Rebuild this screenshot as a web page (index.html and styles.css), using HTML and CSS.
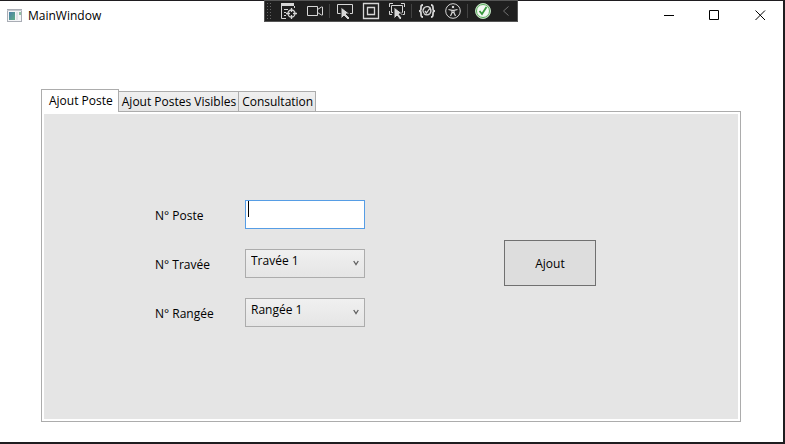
FILE: index.html
```html
<!DOCTYPE html>
<html lang="fr">
<head>
<meta charset="utf-8">
<title>MainWindow</title>
<link rel="stylesheet" href="styles.css">
</head>
<body>
<div class="window">
  <header class="titlebar">
    <svg class="app-icon" width="16" height="14" viewBox="0 0 16 14" aria-hidden="true">
      <defs>
        <linearGradient id="pane" x1="0" y1="0" x2="1" y2="1"><stop offset="0" stop-color="#4a7fa8"/><stop offset="1" stop-color="#5fae86"/></linearGradient>
      </defs>
      <rect x="0.5" y="0.5" width="14" height="12" fill="#f4f5f7" stroke="#a9adb5"/>
      <path d="M0 1.5h15" stroke="#c3c7ce"/>
      <rect x="2" y="3" width="6" height="8" fill="url(#pane)"/>
      <rect x="9" y="3" width="2" height="8" fill="#dfe2e6"/>
      <rect x="12" y="3" width="2" height="3" fill="#8fc0a4"/>
    </svg>
    <h1 class="title">MainWindow</h1>
    <div class="controls">
      <button class="control" aria-label="Réduire"><svg width="11" height="11" viewBox="0 0 11 11"><path d="M1 5.5h10"/></svg></button>
      <button class="control" aria-label="Agrandir"><svg width="11" height="11" viewBox="0 0 11 11"><path d="M.5.5h9v9h-9z"/></svg></button>
      <button class="control" aria-label="Fermer"><svg width="11" height="11" viewBox="0 0 11 11"><path d="M.5.5l9.500 9.500M10 .5L.5 10"/></svg></button>
    </div>
  </header>

  <div class="debugbar" role="toolbar" aria-label="Outils de débogage">
    <span class="grip"></span>
    <button class="tool" aria-label="Arborescence visuelle"><svg width="18" height="18" viewBox="0 0 18 18"><path d="M1 2.500h13" stroke-width="3"/><path d="M1.500 1v15.500H6M14.500 4v2M4 7.500h4M4 10.500h2M4 13.500h2"/><circle cx="11.500" cy="11.500" r="3.500" stroke-width="1.300"/><path d="M11.500 6v4M11.500 13v4M6 11.500h4M13 11.500h4" stroke-width="1.300"/></svg></button>
    <button class="tool" aria-label="Caméra"><svg width="18" height="18" viewBox="0 0 18 18"><path d="M1.500 4.500h10v9h-10zM11.500 7.500l4-2.500h1v8h-1l-4-2.500"/></svg></button>
    <span class="separator"></span>
    <button class="tool" aria-label="Sélectionner un élément"><svg width="18" height="18" viewBox="0 0 18 18"><path d="M5 11.500H1.500v-9h15v9H13"/><path class="solid" d="M5 5v12l3-3 4 4 2-2-4-4h4z"/></svg></button>
    <button class="tool" aria-label="Afficher les repères"><svg width="18" height="18" viewBox="0 0 18 18"><path d="M1.500 1.500h15v15h-15zM5.500 5.500h7v7h-7z" stroke-width="1.300"/></svg></button>
    <button class="tool" aria-label="Suivre l'élément actif"><svg width="18" height="18" viewBox="0 0 18 18"><path d="M1.500 5V1.500H5M13 1.500h3.500V5M1.500 9v3.500H4M13 12.500h3.500V9M5 10.500H3.500v-7h11v7H13"/><path class="solid" d="M6 5v12l3-3 3 4 2-2-3-4h4z"/></svg></button>
    <span class="separator"></span>
    <button class="tool" aria-label="Rechargement à chaud"><svg width="18" height="18" viewBox="0 0 18 18"><path d="M5 3C3 3 3 4 3 6s0 3-2 3c2 0 2 1 2 3s0 3 2 3M13 3c2 0 2 1 2 3s0 3 2 3c-2 0-2 1-2 3s0 3-2 3" stroke-width="1.800"/><path d="M13 8a4 4 0 0 0-7-2 4 4 0 0 0 0 5M12 6.500a4 4 0 0 1 0 5 4 4 0 0 1-6 0M7 9l1.500 2L12 6" stroke-width="1.300"/></svg></button>
    <button class="tool" aria-label="Accessibilité"><svg width="18" height="18" viewBox="0 0 18 18"><circle cx="9" cy="9" r="7.300"/><circle class="solid" cx="9" cy="5" r="1.800"/><path d="M4.500 7.500L8 8.300h2l3.500-.8M8 8.300v2.500L6.500 14M10 8.300v2.500l1.500 3.200M8 10.500h2" stroke-width="1.200"/></svg></button>
    <span class="separator"></span>
    <button class="tool" aria-label="Aucun échec de liaison"><svg width="18" height="18" viewBox="0 0 18 18"><circle cx="9" cy="9" r="7.500" fill="#f3f8f3" stroke="#b9dcb9"/><circle cx="9" cy="9" r="6.500" fill="none" stroke="#58ab5a"/><path d="M5.500 9l2.500 3 4.500-7" stroke="#36963b" stroke-width="1.800"/></svg></button>
    <button class="tool collapse" aria-label="Replier"><svg width="18" height="18" viewBox="0 0 18 18"><path d="M11.500 4.500L6.500 9l5 4.500" stroke="#727272"/></svg></button>
  </div>

  <main class="content">
    <div class="tabs" role="tablist">
      <button class="tab selected" role="tab" aria-selected="true" aria-controls="panel">Ajout Poste</button>
      <button class="tab" role="tab" aria-selected="false">Ajout Postes Visibles</button>
      <button class="tab" role="tab" aria-selected="false">Consultation</button>
    </div>
    <section class="panel" id="panel" role="tabpanel">
      <form class="form">
        <div class="fields">
          <label class="label" for="poste">N° Poste</label>
          <div class="field"><input class="box text" id="poste" type="text" autocomplete="off"><span class="caret"></span></div>
          <label class="label" for="travee">N° Travée</label>
          <div class="field"><select class="box choice" id="travee"><option>Travée 1</option></select><svg class="arrow" width="6" height="6" viewBox="0 0 6 6"><path d="M.7 1L3 4.500 5.300 1"/></svg></div>
          <label class="label" for="rangee">N° Rangée</label>
          <div class="field"><select class="box choice" id="rangee"><option>Rangée 1</option></select><svg class="arrow" width="6" height="6" viewBox="0 0 6 6"><path d="M.7 1L3 4.500 5.300 1"/></svg></div>
        </div>
        <button class="submit" type="button">Ajout</button>
      </form>
    </section>
  </main>
</div>
</body>
</html>
```
FILE: styles.css
```css
* {
  box-sizing: border-box;
}

body {
  margin: 0;
  font: 12px/16px "Open Sans", "Noto Sans", sans-serif;
  color: #000;
}

button,
input,
select {
  margin: 0;
  font: inherit;
  color: inherit;
}

svg {
  display: block;
  fill: none;
}

.window {
  position: relative;
  display: flex;
  flex-direction: column;
  min-height: 100vh;
  background: #fff;
  border: solid #1f1d20;
  border-width: 1px 2px 2px 0;
}

.titlebar {
  display: flex;
  align-items: center;
  height: 29px;
  padding-left: 7px;
}

.title {
  margin: 0 0 0 5px;
  font-size: 12px;
  font-weight: 400;
}

.controls {
  display: flex;
  margin-left: auto;
}

.control {
  display: grid;
  place-items: center;
  width: 46px;
  height: 29px;
  padding: 0;
  background: none;
  border: 0;
}

.control path {
  stroke: #000;
}

.debugbar {
  position: absolute;
  top: -1px;
  left: calc(50% - 1px);
  display: flex;
  align-items: center;
  height: 22px;
  transform: translateX(-50%);
  background: #1f1f1f;
  border: 1px solid #555;
}

.grip {
  width: 11px;
  height: 18px;
  background: radial-gradient(circle, #666 0 1px, transparent 1px) 2px 0 / 3px 3px content-box;
  padding: 0 3px 0 2px;
}

.tool {
  display: grid;
  place-items: center;
  width: 26px;
  height: 20px;
  padding: 0;
  background: none;
  border: 0;
  stroke: #d6d6d6;
}

.tool .solid {
  fill: #d6d6d6;
  stroke: #1f1f1f;
  stroke-width: 1px;
}

.collapse {
  width: 21px;
}

.separator {
  width: 4px;
  height: 14px;
  background: linear-gradient(#424242, #424242) center / 1px 100% no-repeat;
}

.content {
  display: flex;
  flex: 1;
  flex-direction: column;
  padding: 59px 42px 20px 41px;
}

.tabs {
  display: flex;
  align-items: flex-end;
}

.tab {
  height: 20px;
  padding: 0 2px 0 3px;
  background: linear-gradient(#f0f0f0, #e5e5e5);
  border: 1px solid #acacac;
  border-width: 1px 1px 0 0;
}

.tab.selected {
  z-index: 1;
  height: 23px;
  margin-bottom: -1px;
  padding: 0 5px 0 7px;
  background: #fff;
  border-left-width: 1px;
}

.panel {
  display: flex;
  flex: 1;
  padding: 2px;
  border: 1px solid #acacac;
}

.form {
  display: flex;
  flex: 1;
  align-items: center;
  align-self: stretch;
  gap: 139px;
  padding: 0 111px 7px;
  background: #e5e5e5;
}

.fields {
  display: grid;
  grid-template-columns: 90px 120px;
  row-gap: 20px;
  align-items: center;
}

.label {
  padding-top: 4px;
}

.field {
  position: relative;
}

.box {
  display: block;
  width: 100%;
  height: 29px;
  border: 1px solid #acacac;
  border-radius: 0;
  outline: 0;
}

.text {
  padding: 0 3px 8px;
  background: #fff;
  border-color: #569de5;
}

.caret {
  position: absolute;
  top: 1px;
  left: 3px;
  width: 1px;
  height: 16px;
  background: #000;
}

.choice {
  appearance: none;
  padding: 0 20px 4px 5px;
  background: linear-gradient(#f0f0f0, #e5e5e5);
}

.arrow {
  position: absolute;
  top: 11px;
  right: 6px;
  pointer-events: none;
}

.arrow path {
  stroke: #606060;
  stroke-width: 1.3px;
}

.submit {
  width: 92px;
  height: 46px;
  padding: 2px 0 0;
  background: #ddd;
  border: 1px solid #707070;
}
```
